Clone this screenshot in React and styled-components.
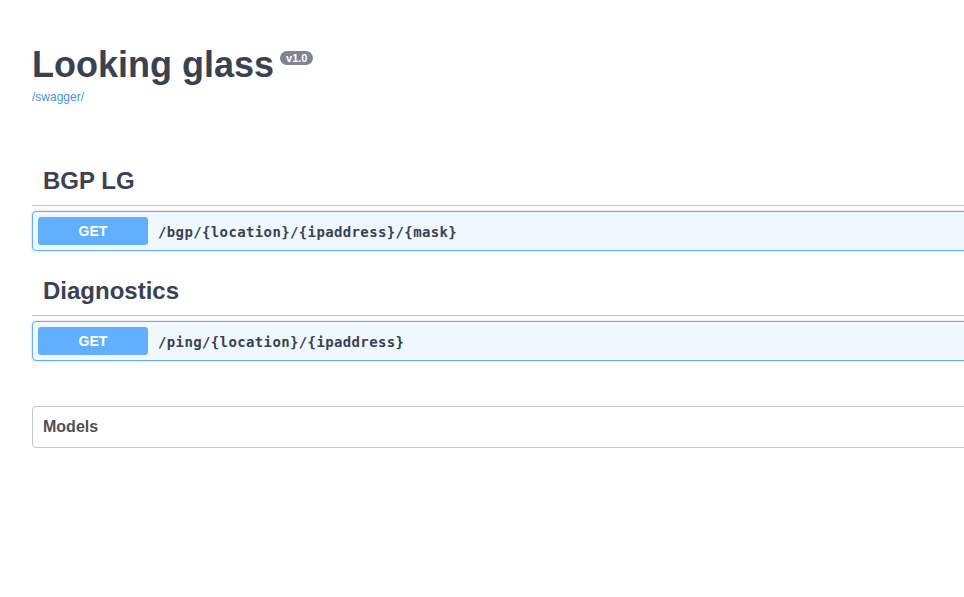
import React from 'react'
import styled, { createGlobalStyle } from 'styled-components'

const GlobalStyle = createGlobalStyle`
  html, body {
    margin: 0;
    padding: 0;
    background: #ffffff;
    overflow: hidden;
  }
  body {
    font-family: "Liberation Sans", Arial, sans-serif;
    color: #3b4151;
  }
`

const Wrapper = styled.div`
  width: 1400px;
  padding: 43px 0 40px 32px;
  box-sizing: border-box;
`

const Info = styled.div`
  margin-bottom: 53px;
`

const TitleRow = styled.div`
  display: flex;
  align-items: flex-start;
`

const Title = styled.h2`
  margin: 0;
  font-size: 36px;
  line-height: 1.2;
  font-weight: 700;
  color: #3b4151;
`

const Version = styled.small`
  margin: 8px 0 0 6px;
  padding: 2px 6px 1px;
  border-radius: 57px;
  background: #7d8492;
  color: #ffffff;
  font-size: 11px;
  font-weight: 700;
  line-height: 11px;
`

const BaseUrl = styled.a`
  display: block;
  margin-top: 4px;
  font-size: 12px;
  color: #4990e2;
  text-decoration: none;
`

const Section = styled.section`
  margin-bottom: 16px;
`

const TagHeading = styled.h3`
  margin: 0 0 5px;
  padding: 10px 0 9px 11px;
  font-size: 24px;
  line-height: 1.2;
  font-weight: 700;
  color: #3b4151;
  border-bottom: 1px solid #c4c6cb;
`

const OpBlock = styled.div`
  display: flex;
  align-items: center;
  gap: 10px;
  padding: 5px;
  border: 1px solid ${(p) => p.$color};
  border-radius: 4px;
  background: ${(p) => p.$bg};
  box-shadow: 0 0 3px rgba(0, 0, 0, 0.19);
`

const Method = styled.span`
  width: 110px;
  height: 28px;
  display: flex;
  align-items: center;
  justify-content: center;
  border-radius: 3px;
  background: ${(p) => p.$color};
  color: #ffffff;
  font-size: 14px;
  font-weight: 700;
`

const Path = styled.span`
  padding-top: 2px;
  font-family: "DejaVu Sans Mono", "Liberation Mono", monospace;
  font-size: 14px;
  letter-spacing: 0.37px;
  font-weight: 700;
  color: #3b4151;
`

const Models = styled.section`
  margin-top: 45px;
  border: 1px solid #c4c6cb;
  border-radius: 4px;
`

const ModelsTitle = styled.h4`
  margin: 0;
  padding: 10px 20px 10px 10px;
  font-size: 16px;
  line-height: 20px;
  font-weight: 700;
  color: #505050;
`

const tags = [
  { name: 'BGP LG', ops: [{ method: 'GET', path: '/bgp/{location}/{ipaddress}/{mask}' }] },
  { name: 'Diagnostics', ops: [{ method: 'GET', path: '/ping/{location}/{ipaddress}' }] },
]

const App = () => {
  return (
    <Wrapper>
      <GlobalStyle />
      <Info>
        <TitleRow>
          <Title>Looking glass</Title>
          <Version>v1.0</Version>
        </TitleRow>
        <BaseUrl href="#">/swagger/</BaseUrl>
      </Info>
      {tags.map((tag) => (
        <Section key={tag.name}>
          <TagHeading>{tag.name}</TagHeading>
          {tag.ops.map((op) => (
            <OpBlock key={op.path} $color="#61affe" $bg="#eff7ff">
              <Method $color="#61affe">{op.method}</Method>
              <Path>{op.path}</Path>
            </OpBlock>
          ))}
        </Section>
      ))}
      <Models>
        <ModelsTitle>Models</ModelsTitle>
      </Models>
    </Wrapper>
  )
}

export default App
